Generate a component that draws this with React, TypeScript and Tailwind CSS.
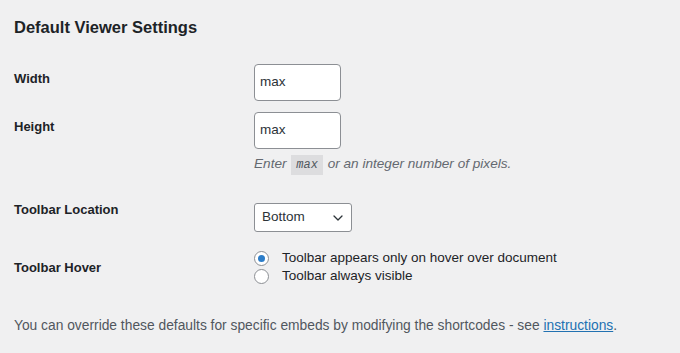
import React from "react";

export default function App() {
  return (
    <div
      className="w-[680px] h-[353px] bg-[#f0f0f1] text-[#1d2327] pl-[14px] overflow-hidden"
      style={{ fontFamily: '"Liberation Sans", Arial, sans-serif' }}
    >
      <h2 className="pt-[17px] text-[16.5px] leading-[20px] font-bold text-[#1d2327]">Default Viewer Settings</h2>

      {/* Width */}
      <div className="flex items-start mt-[27px]">
        <div className="w-[240px] pt-[6px] text-[13px] leading-[18px] font-bold">Width</div>
        <div className="w-[87px] h-[37px] bg-white border border-[#8c8f94] rounded-[4px] flex items-center pl-[5px] text-[13.5px] text-[#2c3338]">
          max
        </div>
      </div>

      {/* Height */}
      <div className="flex items-start mt-[11px]">
        <div className="w-[240px] pt-[6px] text-[13px] leading-[18px] font-bold">Height</div>
        <div>
          <div className="w-[87px] h-[37px] bg-white border border-[#8c8f94] rounded-[4px] flex items-center pl-[5px] text-[13.5px] text-[#2c3338]">
            max
          </div>
          <p className="mt-[5px] text-[13.6px] leading-[20px] italic text-[#646970] whitespace-nowrap">
            Enter{" "}
            <code
              className="bg-[#dddddf] px-[5px] py-[3px] mx-[1px] text-[12px] italic text-[#50575e]"
              style={{ fontFamily: '"Liberation Mono", monospace' }}
            >
              max
            </code>{" "}
            or an integer number of pixels.
          </p>
        </div>
      </div>

      {/* Toolbar Location */}
      <div className="flex items-start mt-[28px]">
        <div className="w-[240px] -mt-[2px] text-[13px] leading-[18px] font-bold">Toolbar Location</div>
        <div className="w-[98px] h-[29px] bg-white border border-[#8c8f94] rounded-[3px] flex items-center justify-between pl-[7px] pr-[8px] text-[13.5px] text-[#2c3338]">
          <span>Bottom</span>
          <svg width="10" height="6" viewBox="0 0 10 6" fill="none">
            <path d="M1 1l4 4 4-4" stroke="#2c3338" strokeWidth="1.3" strokeLinecap="round" strokeLinejoin="round" />
          </svg>
        </div>
      </div>

      {/* Toolbar Hover */}
      <div className="flex items-start mt-[17px]">
        <div className="w-[240px] pt-[9.5px] text-[13px] leading-[18px] font-bold">Toolbar Hover</div>
        <div className="flex flex-col text-[13.5px] leading-[18px] text-[#1d2327]">
          <label className="flex items-center h-[18px]">
            <span className="w-[15px] h-[15px] rounded-full border border-[#8c8f94] bg-white flex items-center justify-center">
              <span className="w-[7px] h-[7px] rounded-full bg-[#2c7dc9]" />
            </span>
            <span className="ml-[13px]">Toolbar appears only on hover over document</span>
          </label>
          <label className="flex items-center h-[18px]">
            <span className="w-[15px] h-[15px] rounded-full border border-[#8c8f94] bg-white" />
            <span className="ml-[13px]">Toolbar always visible</span>
          </label>
        </div>
      </div>

      {/* Footer */}
      <p className="mt-[31px] text-[13.8px] leading-[20px] text-[#50575e] whitespace-nowrap">
        You can override these defaults for specific embeds by modifying the shortcodes - see{" "}
        <a className="text-[#2271b1] underline">instructions</a>.
      </p>
    </div>
  );
}
